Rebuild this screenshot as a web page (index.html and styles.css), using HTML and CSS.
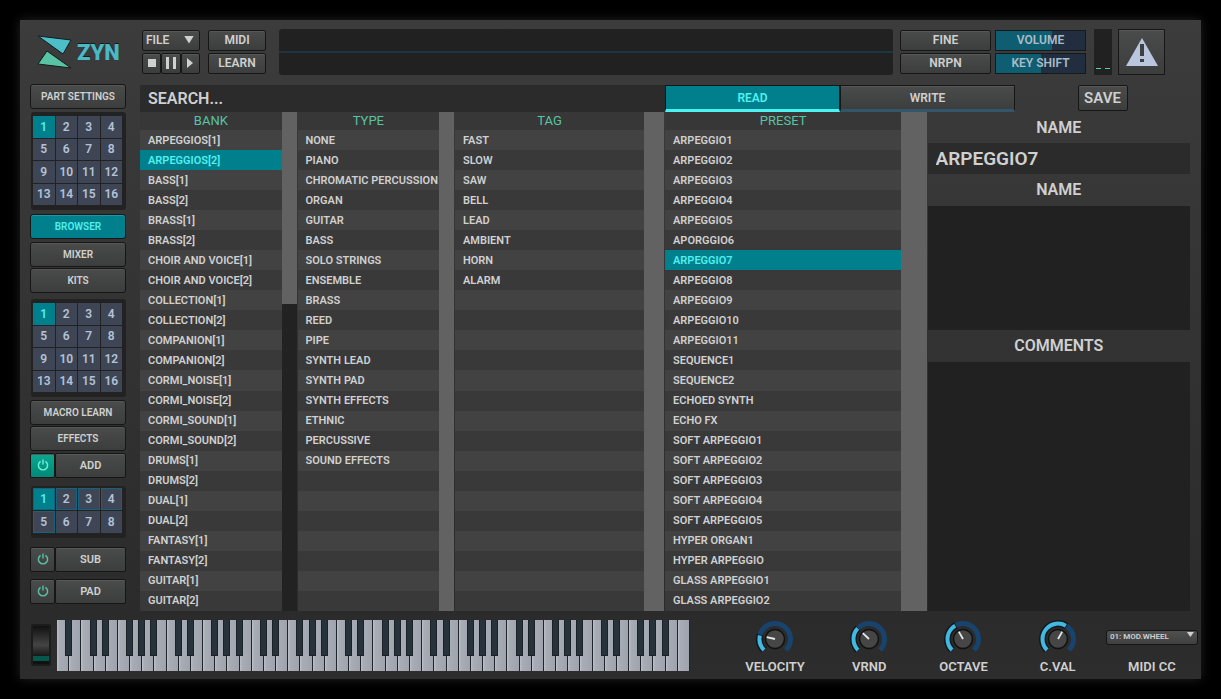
FILE: index.html
```html
<!doctype html>
<html lang="en">
  <head>
    <meta charset="utf-8">
    <title>Zyn</title>
    <link rel="stylesheet" href="styles.css">
  </head>
  <body>
    <svg width="0" height="0" class="defs">
      <symbol id="power" viewBox="0 0 12 12">
        <path d="M3.6 2.4a4.6 4.6 0 1 0 4.8 0M6 .6v5" fill="none" stroke="currentColor" stroke-width="1.4"/>
      </symbol>
    </svg>
    <div class="window">
      <header class="header">
        <div class="logo">
          <svg width="36" height="36" viewBox="0 0 36 36">
            <path d="M1 2l33 4-8 14z" fill="#4bc0c8" stroke="#141c1e"/>
            <path d="M10 17l24 17-33-4z" fill="#58c4a4" stroke="#141c1e"/>
          </svg>
          <span>ZYN</span>
        </div>
        <div class="stack menu">
          <button class="btn file" aria-haspopup="menu">FILE <i class="arrow"></i></button>
          <div class="transport">
            <button class="btn" aria-label="Stop"><svg width="8" height="8"><path d="M0 0h8v8H0z"/></svg></button>
            <button class="btn" aria-label="Pause"><svg width="10" height="12"><path d="M0 0h3v12H0zM7 0h3v12H7z"/></svg></button>
            <button class="btn" aria-label="Play"><svg width="6" height="10"><path d="M0 0l6 5-6 5z"/></svg></button>
          </div>
        </div>
        <div class="stack menu">
          <button class="btn">MIDI</button>
          <button class="btn">LEARN</button>
        </div>
        <div class="scope"></div>
        <div class="stack wide">
          <button class="btn">FINE</button>
          <button class="btn">NRPN</button>
        </div>
        <div class="stack wide">
          <label class="slider" style="--value: 63%"><span>VOLUME</span><input type="range" value="63"></label>
          <label class="slider" style="--value: 51%"><span>KEY SHIFT</span><input type="range" value="51"></label>
        </div>
        <div class="meter"><i></i><i></i></div>
        <button class="btn warning" aria-label="Panic">
          <svg width="32" height="28" viewBox="0 0 32 28">
            <path d="M16 0l16 28H0z" fill="#b9c6de"/>
            <path d="M14 6h4v12h-4zM14 21h4v3h-4z" fill="#3d4043"/>
          </svg>
        </button>
      </header>

      <div class="main">
        <nav class="sidebar">
          <button class="btn side">PART SETTINGS</button>
          <div class="pads" data-pads="16"></div>
          <button class="btn side active browser">BROWSER</button>
          <button class="btn side">MIXER</button>
          <button class="btn side">KITS</button>
          <div class="pads kit" data-pads="16"></div>
          <button class="btn side">MACRO LEARN</button>
          <button class="btn side">EFFECTS</button>
          <div class="engine on">
            <button class="btn power" aria-label="Enable add"><svg><use href="#power"/></svg></button>
            <button class="btn">ADD</button>
          </div>
          <div class="pads voices" data-pads="8"></div>
          <div class="engine">
            <button class="btn power" aria-label="Enable sub"><svg><use href="#power"/></svg></button>
            <button class="btn">SUB</button>
          </div>
          <div class="engine">
            <button class="btn power" aria-label="Enable pad"><svg><use href="#power"/></svg></button>
            <button class="btn">PAD</button>
          </div>
        </nav>

        <div class="browse">
          <div class="toolbar">
            <input class="search" type="text" placeholder="SEARCH..." aria-label="Search">
            <button class="btn tab selected">READ</button>
            <button class="btn tab">WRITE</button>
            <button class="btn save">SAVE</button>
          </div>
          <div class="columns">
            <section class="list" data-list="bank"><h2>BANK</h2><div class="scroll"><i></i></div></section>
            <section class="list" data-list="type"><h2>TYPE</h2><div class="scroll"><i></i></div></section>
            <section class="list" data-list="tag"><h2>TAG</h2><div class="scroll"><i></i></div></section>
            <section class="list" data-list="preset"><h2>PRESET</h2><div class="scroll"><i></i></div></section>
            <section class="info">
              <label for="name">NAME</label>
              <input id="name" type="text" value="ARPEGGIO7">
              <label for="author">NAME</label>
              <textarea id="author"></textarea>
              <label for="comments">COMMENTS</label>
              <textarea id="comments"></textarea>
            </section>
          </div>
        </div>
      </div>

      <footer class="footer">
        <div class="wheel"><input type="range" aria-label="Pitch wheel"></div>
        <div class="piano"></div>
        <div class="knobs">
          <label class="control" data-knob="58"><span>VELOCITY</span></label>
          <label class="control" data-knob="88"><span>VRND</span></label>
          <label class="control" data-knob="105"><span>OCTAVE</span></label>
          <label class="control" data-knob="165"><span>C.VAL</span></label>
          <label class="control">
            <div class="select"><select><option>01: MOD.WHEEL</option></select><i class="arrow"></i></div>
            <span>MIDI CC</span>
          </label>
        </div>
      </footer>
    </div>
    <script>
      (function() {
        var ROWS = 24;

        var lists = {
          bank: {
            selected: 1,
            items: ['ARPEGGIOS[1]', 'ARPEGGIOS[2]', 'BASS[1]', 'BASS[2]', 'BRASS[1]', 'BRASS[2]',
              'CHOIR AND VOICE[1]', 'CHOIR AND VOICE[2]', 'COLLECTION[1]', 'COLLECTION[2]',
              'COMPANION[1]', 'COMPANION[2]', 'CORMI_NOISE[1]', 'CORMI_NOISE[2]', 'CORMI_SOUND[1]',
              'CORMI_SOUND[2]', 'DRUMS[1]', 'DRUMS[2]', 'DUAL[1]', 'DUAL[2]', 'FANTASY[1]',
              'FANTASY[2]', 'GUITAR[1]', 'GUITAR[2]']
          },
          type: {
            items: ['NONE', 'PIANO', 'CHROMATIC PERCUSSION', 'ORGAN', 'GUITAR', 'BASS', 'SOLO STRINGS',
              'ENSEMBLE', 'BRASS', 'REED', 'PIPE', 'SYNTH LEAD', 'SYNTH PAD', 'SYNTH EFFECTS',
              'ETHNIC', 'PERCUSSIVE', 'SOUND EFFECTS']
          },
          tag: {
            items: ['FAST', 'SLOW', 'SAW', 'BELL', 'LEAD', 'AMBIENT', 'HORN', 'ALARM']
          },
          preset: {
            selected: 6,
            items: ['ARPEGGIO1', 'ARPEGGIO2', 'ARPEGGIO3', 'ARPEGGIO4', 'ARPEGGIO5', 'APORGGIO6',
              'ARPEGGIO7', 'ARPEGGIO8', 'ARPEGGIO9', 'ARPEGGIO10', 'ARPEGGIO11', 'SEQUENCE1',
              'SEQUENCE2', 'ECHOED SYNTH', 'ECHO FX', 'SOFT ARPEGGIO1', 'SOFT ARPEGGIO2',
              'SOFT ARPEGGIO3', 'SOFT ARPEGGIO4', 'SOFT ARPEGGIO5', 'HYPER ORGAN1',
              'HYPER ARPEGGIO', 'GLASS ARPEGGIO1', 'GLASS ARPEGGIO2']
          }
        };

        function createList (section) {
          var list = lists[section.dataset.list];
          var rows = document.createElement('div');
          rows.className = 'rows';
          for (var i = 0; i < ROWS; i++) {
            var row = document.createElement(list.items[i] ? 'button' : 'div');
            row.className = 'row' + (i === list.selected ? ' selected' : '');
            row.textContent = list.items[i] || '';
            rows.appendChild(row);
          }
          section.insertBefore(rows, section.querySelector('.scroll'));
        }

        function createPads (container) {
          for (var i = 1; i <= container.dataset.pads; i++) {
            var pad = document.createElement('button');
            pad.className = 'pad' + (i === 1 ? ' selected' : '');
            pad.textContent = i;
            container.appendChild(pad);
          }
        }

        // 52 white keys, starting on A
        function createPiano () {
          var piano = document.querySelector('.piano');
          for (var i = 0; i < 52; i++) {
            var note = 'ABCDEFG'[i % 7];
            var key = document.createElement('div');
            key.className = 'key';
            if (i < 51 && note !== 'B' && note !== 'E') {
              key.innerHTML = '<i class="sharp"></i>';
            }
            piano.appendChild(key);
          }
        }

        // value is in degrees of the 270 degree sweep
        function createKnob (control) {
          var value = control.dataset.knob;
          var arc = 'd="M9 31A15.500 15.500 0 1 1 31 31" fill="none" pathLength="270"';
          control.insertAdjacentHTML('afterbegin',
            '<div class="knob"><svg width="40" height="40" viewBox="0 0 40 40">' +
            '<path ' + arc + ' stroke="#18436c" stroke-width="5"/>' +
            '<path ' + arc + ' stroke="#14181a" stroke-width="7" stroke-dasharray="' + (+value + 3) + ' 300"/>' +
            '<path ' + arc + ' stroke="#42b9e2" stroke-width="4" stroke-dasharray="' + value + ' 300"/>' +
            '<circle cx="20" cy="20" r="9.500" fill="#464646" stroke="#111" stroke-width="1.500"/>' +
            '<path d="M20 20V11.500" stroke="#e8e8e8" stroke-width="1.800" transform="rotate(' + (value - 135) + ' 20 20)"/>' +
            '</svg><input type="range" max="270" value="' + value + '"></div>');
        }

        document.querySelectorAll('[data-list]').forEach(createList);
        document.querySelectorAll('[data-pads]').forEach(createPads);
        document.querySelectorAll('[data-knob]').forEach(createKnob);
        createPiano();
      })();
    </script>
  </body>
</html>
```
FILE: styles.css
```css
* {
  box-sizing: border-box;
}

body {
  margin: 0;
  padding: 20px;
  background: #000;
  color: #d0d0d0;
  font-family: Roboto, sans-serif;
  font-size: 11px;
  font-weight: 600;
}

button, input, select, textarea {
  font: inherit;
  color: inherit;
  margin: 0;
  padding: 0;
  border: 0;
  border-radius: 0;
  outline: 0;
}

.defs {
  position: absolute;
}

.window {
  display: flex;
  flex-direction: column;
  min-height: calc(100vh - 40px);
  background: linear-gradient(#3c3c3c, #393939 15%, #2b2b2b 90%, #2d2d2d);
  box-shadow: 0 0 10px #222;
}

.btn {
  display: flex;
  align-items: center;
  justify-content: center;
  padding-bottom: 1px;
  background: linear-gradient(#4a4c4b, #3c3e3d);
  border: 1px solid #161616;
  border-radius: 2px;
  box-shadow: inset 0 1px #565756;
}

.arrow {
  width: 10px;
  height: 8px;
  background: #d0d0d0;
  clip-path: polygon(0 0, 100% 0, 50% 100%);
}

/* header */

.header {
  display: flex;
  align-items: center;
  height: 64px;
  padding: 0 36px 0 17px;
}

.logo {
  display: flex;
  align-items: center;
  width: 105px;
  color: #4bb8c4;
  font-size: 22px;
  font-weight: 900;
  text-shadow: 0 -1px #0f1a1c;
}

.logo span {
  margin-left: 4px;
}

.stack {
  display: flex;
  flex-direction: column;
  gap: 2px;
  font-size: 12px;
}

.stack > * {
  height: 21px;
  padding-bottom: 2px;
}

.stack > .transport {
  padding: 0;
}

.menu {
  width: 58px;
  margin-right: 8px;
}

.wide {
  width: 91px;
  margin-right: 4px;
}

.stack > .file {
  justify-content: space-between;
  padding: 0 5px 2px 3px;
}

.transport {
  display: grid;
  grid-template-columns: 1fr 1fr 1fr;
}

.transport svg {
  fill: #d0d0d0;
}

.scope {
  flex: 1;
  height: 46px;
  margin: 0 7px 0 5px;
  border-radius: 3px;
  background: linear-gradient(#1f3340, #1f3340) 0 50% / 100% 2px no-repeat #212121;
}

.slider {
  position: relative;
  display: flex;
  align-items: center;
  justify-content: center;
  border: 1px solid #15191c;
  background: linear-gradient(to right, #0e5d70 var(--value), #202e40 var(--value));
  color: #a9bcc9;
}

.slider input, .knob input, .wheel input {
  position: absolute;
  inset: 0;
  width: 100%;
  height: 100%;
  opacity: 0;
}

.meter {
  display: flex;
  align-items: flex-end;
  justify-content: center;
  gap: 4px;
  width: 18px;
  height: 46px;
  margin: 0 6px 0 4px;
  padding-bottom: 6px;
  background: #212121;
}

.meter i {
  width: 5px;
  height: 1px;
  background: #4fd0b0;
}

.warning {
  width: 47px;
  height: 46px;
  border-radius: 0;
}

/* sidebar */

.main {
  display: flex;
  flex: 1;
  padding-right: 11px;
}

.sidebar {
  display: flex;
  flex-direction: column;
  width: 96px;
  margin: 0 14px 0 10px;
}

.side, .engine {
  flex: none;
  height: 25px;
  margin-bottom: 1px;
  border-radius: 3px;
  font-size: 10px;
}

.active {
  background: #00808c;
  box-shadow: inset 0 1px #189aa4;
  color: #4ff0f0;
}

.browser {
  margin-bottom: 3px;
}

.pads {
  display: grid;
  grid-template-columns: repeat(4, 1fr);
  grid-auto-rows: 1fr;
  gap: 1px;
  height: 98px;
  margin: 2px 0 4px 1px;
  padding: 4px 4px 5px 2px;
  border-radius: 3px;
  background: #222;
}

.kit {
  margin: 5px 0 3px 1px;
}

.pad {
  background: #3e4655;
  color: #b4c2d8;
  font-size: 12px;
}

.pads .selected {
  background: #00808c;
  color: #4ff0f0;
}

.voices {
  height: 52px;
  margin: 7px 0 9px 1px;
  padding: 2px 4px 5px 2px;
}

.voices .pad:nth-child(-n+5) {
  border: 1px solid #18627c;
}

.engine {
  display: grid;
  grid-template-columns: 25px 1fr;
  margin-bottom: 7px;
  font-size: 11px;
}

.engine.on {
  margin: 1px 0;
}

.power {
  color: #58c4a4;
}

.power svg {
  width: 12px;
  height: 12px;
}

.on .power {
  background: linear-gradient(#0aa78e, #008a78);
  color: #6ff0d8;
}

/* browser */

.browse {
  display: flex;
  flex-direction: column;
  flex: 1;
}

.toolbar {
  display: grid;
  grid-template-columns: 3fr 1fr 1fr 1fr;
  height: 28px;
  padding-top: 1px;
  font-size: 16px;
}

.search {
  min-width: 0;
  padding: 0 8px 1px;
  background: #2b2b2b;
}

.search::placeholder {
  color: #d0d0d0;
  opacity: 1;
}

.tab {
  border-bottom: 3px solid #335569;
  border-radius: 0;
  padding-bottom: 0;
  font-size: 12px;
}

.tab.selected {
  background: #00808c;
  border-bottom-color: #4ff0f0;
  box-shadow: none;
  color: #4ff0f0;
}

.save {
  justify-self: center;
  width: 50px;
  height: 26px;
  font-size: 15px;
}

.columns {
  display: grid;
  grid-template-columns: 3fr 3fr 4fr 5fr 5fr;
  flex: 1;
}

.list {
  display: grid;
  grid-template-columns: 9fr 1fr;
  grid-template-rows: 18px 1fr;
  min-width: 0;
}

.list h2 {
  margin: 0;
  background: #373738;
  color: #58c4a4;
  font-size: 13px;
  font-weight: 400;
  line-height: 18px;
  text-align: center;
}

.rows {
  display: grid;
  grid-template-rows: repeat(24, 1fr);
  grid-row: 2;
  min-width: 0;
}

.row {
  position: relative;
  z-index: 1;
  min-width: 0;
  min-height: 20px;
  padding-left: 8px;
  background: #424242;
  text-align: left;
  white-space: nowrap;
}

.row:nth-child(even) {
  background: #39393a;
}

.rows .selected {
  background: #00808c;
  color: #4ff0f0;
}

.scroll {
  grid-column: 2;
  grid-row: 1 / 3;
  margin-right: 1px;
  background: #222;
}

.scroll i {
  display: block;
  height: 100%;
  background: #626262;
}

[data-list="bank"] .scroll i {
  height: calc(500% / 13);
}

.info {
  display: grid;
  grid-template-rows: 1fr 1fr 1fr 4fr 1fr 8fr;
  min-width: 0;
  font-size: 16px;
}

.info label {
  align-self: center;
  text-align: center;
}

.info input, .info textarea {
  width: 100%;
  height: 100%;
  padding: 0 8px;
  background: #212121;
  resize: none;
}

.info input {
  background: #2b2b2b;
  font-size: 19px;
}

/* footer */

.footer {
  display: flex;
  align-items: center;
  height: 68px;
  padding: 0 2px 0 11px;
}

.wheel {
  position: relative;
  width: 20px;
  height: 42px;
  margin-right: 6px;
  border: 2px solid #1c1c1c;
  border-radius: 2px;
  background: linear-gradient(#111, #444 50%, #161616 80%, #06584a 80%, #06584a 92%, #111 92%);
}

.piano {
  display: flex;
  flex: 1;
  height: 51px;
  background: #1e262c;
}

.key {
  position: relative;
  flex: 1;
  border-right: 1px solid #1e262c;
  background: linear-gradient(to right, #bcc0c8, #a7acb5 20%, #9ea3ad);
}

.sharp {
  position: absolute;
  top: 0;
  right: -4px;
  z-index: 1;
  width: 7px;
  height: 36px;
  background: #27323b;
  border: 1px solid #1a2127;
  border-top: 0;
}

.knobs {
  display: grid;
  grid-template-columns: repeat(5, 1fr);
  width: 471px;
  margin-left: 38px;
  padding-top: 4px;
  font-size: 13px;
}

.control {
  display: flex;
  flex-direction: column;
  align-items: center;
  justify-content: space-between;
}

.control > span {
  line-height: 16px;
}

.knob {
  position: relative;
  height: 40px;
}

.knob svg {
  display: block;
}

.select {
  position: relative;
  width: 92px;
  margin-top: 8px;
}

.select select {
  width: 100%;
  height: 15px;
  padding: 0 0 1px 3px;
  appearance: none;
  border: 1px solid #151515;
  border-radius: 3px;
  background: linear-gradient(#505050, #404040);
  font-size: 8px;
}

.select .arrow {
  position: absolute;
  top: 5px;
  right: 4px;
  width: 7px;
  height: 5px;
}
```
